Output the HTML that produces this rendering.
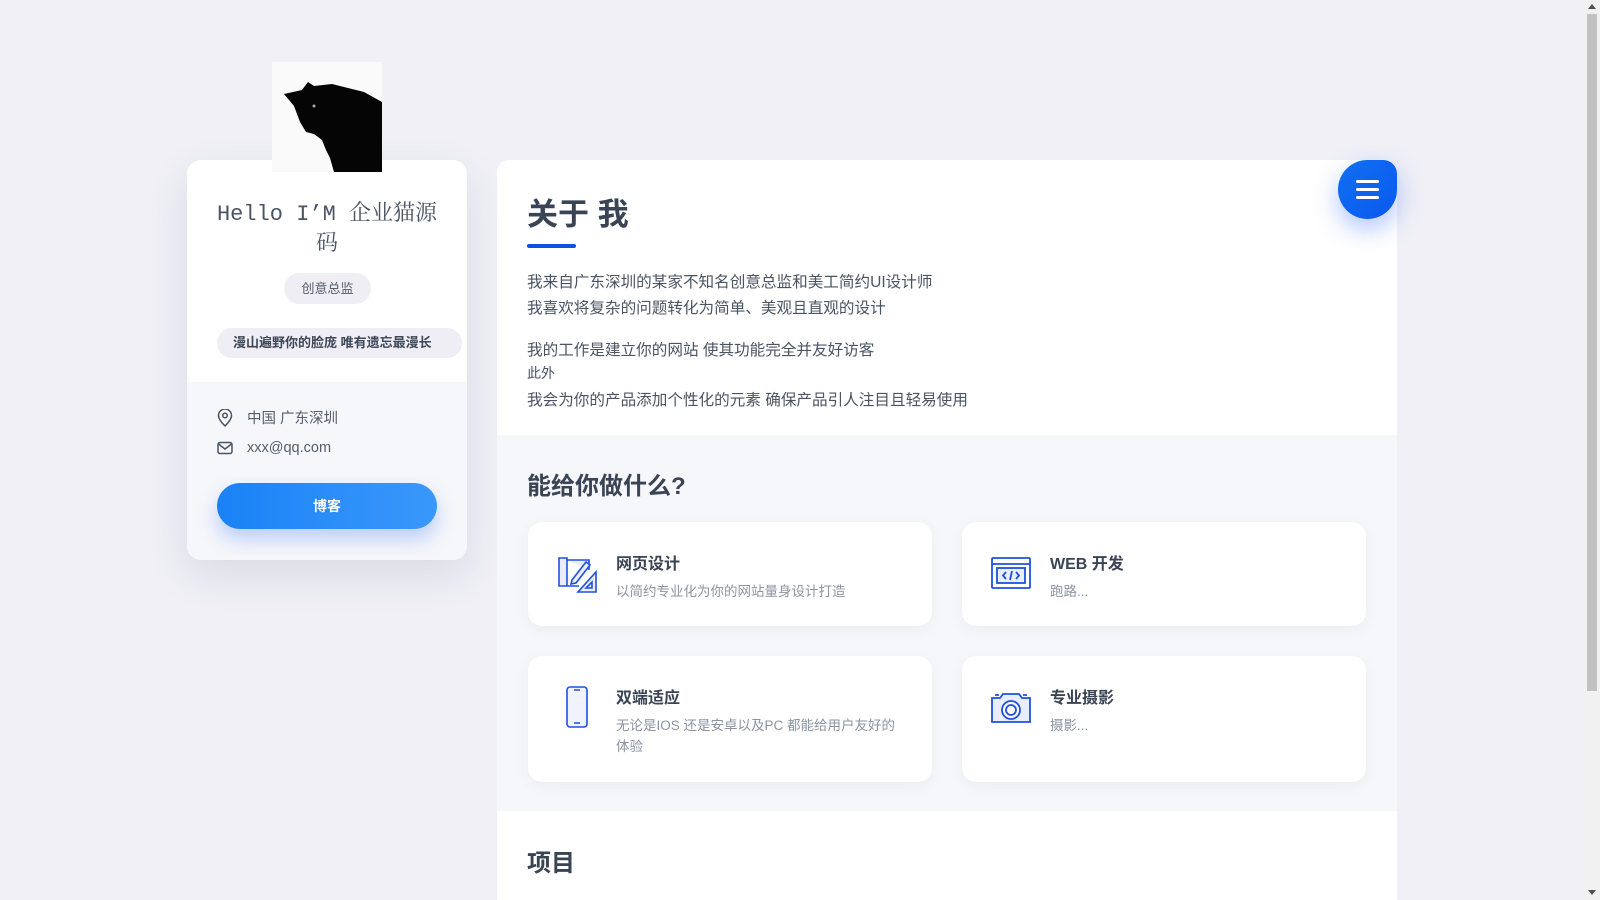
<!DOCTYPE html>
<html><head><meta charset="utf-8"><style>
*{margin:0;padding:0;box-sizing:border-box}
html,body{width:1600px;height:900px;overflow:hidden}
body{background:#f0f0f6;font-family:"Liberation Sans","Noto Sans CJK SC",sans-serif;color:#44505e;position:relative}
.sb{position:absolute;left:1584px;top:0;width:16px;height:900px;background:#f1f1f1}
.sb .th{position:absolute;left:3px;top:14px;width:10px;height:677px;background:#c1c1c1}
.sb .ar{position:absolute;left:4px;width:0;height:0;border-left:4px solid transparent;border-right:4px solid transparent}
.lc{position:absolute;left:187px;top:160px;width:280px;height:400px;background:#fff;border-radius:14px;box-shadow:0 15px 40px rgba(60,70,110,.12);overflow:hidden}
.av{position:absolute;left:272px;top:62px;width:110px;height:110px;background:#fafafa;overflow:hidden;z-index:2}
.lc h1{position:absolute;top:40px;left:0;width:280px;text-align:center;font-family:"Liberation Mono","Noto Serif CJK SC",monospace;font-weight:normal;font-size:22px;line-height:30px;color:#4a5565;padding:0 24px}
.badge{position:absolute;left:97px;top:113px;width:87px;height:31px;border-radius:16px;background:#eeeef4;font-size:13px;line-height:31px;text-align:center;color:#555e6c}
.quote{position:absolute;left:30px;top:168px;width:245px;height:30px;border-radius:15px;background:#eeeef4;font-size:13px;font-weight:bold;line-height:30px;padding-left:16px;color:#3d4757}
.lb{position:absolute;left:0;top:222px;width:280px;height:178px;background:#f6f7fa}
.row{position:absolute;left:30px;font-size:14.5px;color:#555e6c;display:flex;align-items:center}
.row svg{margin-right:14px}
.btn{position:absolute;left:30px;top:101px;width:220px;height:46px;border-radius:23px;background:linear-gradient(90deg,#1a82f6,#3a98fb);color:#fff;font-size:14px;font-weight:bold;text-align:center;line-height:46px;box-shadow:0 10px 20px rgba(40,110,250,.3)}
.mc{position:absolute;left:497px;top:160px;width:900px;height:760px;background:#fff;border-radius:12px 12px 0 0;overflow:hidden}
.menu{position:absolute;left:1338px;top:160px;width:59px;height:59px;border-radius:30px 14px 30px 30px;background:linear-gradient(135deg,#1170f0,#0a58ef);box-shadow:0 10px 25px rgba(30,90,250,.35);z-index:3}
.menu i{position:absolute;left:18px;width:23px;height:3px;background:#fff;border-radius:2px}
.mc h2{position:absolute;left:30px;top:29px;font-size:31px;color:#3a4455;font-weight:bold}
.ul{position:absolute;left:30px;top:84px;width:49px;height:4px;border-radius:2px;background:#0e53e0}
.p{position:absolute;left:30px;font-size:15.6px;color:#4a5462}
.gs{position:absolute;left:0;top:275px;width:900px;height:376px;background:#f6f7fa}
.gs h3{position:absolute;left:30px;top:31px;font-size:24px;color:#3a4455}
.sc{position:absolute;width:404px;background:#fff;border-radius:14px;box-shadow:0 4px 14px rgba(60,70,110,.06)}
.sc svg{position:absolute;left:28px;top:30px}
.sc b{position:absolute;left:88px;top:28px;font-size:16px;color:#3a4455}
.sc span{position:absolute;left:88px;top:59px;font-size:13.5px;color:#8a94a2;line-height:21px;width:285px}
.proj{position:absolute;left:30px;top:683px;font-size:24px;font-weight:bold;color:#3a4455}
</style></head><body>
<div class="av"><svg width="110" height="110" viewBox="0 0 110 110"><path d="M12 32 L30 28 L36 20 L42 24 L60 22 L92 30 L110 40 L110 110 L62 110 L58 96 L54 88 L50 78 L42 72 L34 70 L28 60 L22 44 Z" fill="#050505"/><circle cx="42" cy="44" r="1.5" fill="#aaa"/></svg></div>
<div class="lc">
<h1>Hello I’M 企业猫源码</h1>
<div class="badge">创意总监</div>
<div class="quote">漫山遍野你的脸庞 唯有遗忘最漫长</div>
<div class="lb">
<div class="row" style="top:25px"><svg width="16" height="18" viewBox="0 0 16 18" fill="none" stroke="#4a5462" stroke-width="1.5"><path d="M8 17C3 12 1.5 9 1.5 6.5a6.5 6.5 0 0113 0C14.5 9 13 12 8 17z"/><circle cx="8" cy="6.5" r="2.3"/></svg>中国 广东深圳</div>
<div class="row" style="top:58px"><svg width="16" height="14" viewBox="0 0 16 14" fill="none" stroke="#4a5462" stroke-width="1.5"><rect x="1" y="1.5" width="14" height="11" rx="2"/><path d="M1.5 3l6.5 5 6.5-5"/></svg>xxx@qq.com</div>
<div class="btn">博客</div>
</div>
</div>
<div class="mc">
<h2>关于 我</h2><div class="ul"></div>
<div class="p" style="top:110px">我来自广东深圳的某家不知名创意总监和美工简约UI设计师</div>
<div class="p" style="top:136px">我喜欢将复杂的问题转化为简单、美观且直观的设计</div>
<div class="p" style="top:178px">我的工作是建立你的网站 使其功能完全并友好访客</div>
<div class="p" style="top:203px;font-size:14px">此外</div>
<div class="p" style="top:228px">我会为你的产品添加个性化的元素 确保产品引人注目且轻易使用</div>
<div class="gs">
<h3>能给你做什么?</h3>
<div class="sc" style="left:31px;top:87px;height:104px"><svg width="42" height="42" viewBox="0 0 42 42" fill="#e8eefc" stroke="#1e50e0" stroke-width="1.6"><path d="M3 6h8v28H3zM11 8h22v10M11 34h12"/><path d="M16 28l14-18 4 3-14 18-5 1z"/><path d="M40 20v20H22z"/><path d="M36 30v6h-6z" fill="none"/></svg><b>网页设计</b><span>以简约专业化为你的网站量身设计打造</span></div>
<div class="sc" style="left:465px;top:87px;height:104px"><svg width="42" height="42" viewBox="0 0 42 42" fill="none" stroke="#1e50e0" stroke-width="1.8"><rect x="2" y="6" width="38" height="30" rx="1"/><path d="M2 12h38"/><rect x="7" y="16" width="28" height="15" fill="#e8eefc"/><path d="M16 20l-3 3.5 3 3.5M26 20l3 3.5-3 3.5M22 19l-2 9"/></svg><b>WEB 开发</b><span>跑路...</span></div>
<div class="sc" style="left:31px;top:221px;height:126px"><svg width="42" height="42" viewBox="0 0 42 42" fill="#f0f3fd" stroke="#1e50e0" stroke-width="1.6"><rect x="11" y="1" width="20" height="40" rx="3"/><path d="M18 4h6M18 37h6" fill="none"/></svg><b>双端适应</b><span>无论是IOS 还是安卓以及PC 都能给用户友好的体验</span></div>
<div class="sc" style="left:465px;top:221px;height:126px"><svg width="42" height="42" viewBox="0 0 42 42" fill="none" stroke="#1e50e0" stroke-width="1.8"><path d="M2 12h8l3-4h16l3 4h8v24H2z" fill="#e8eefc"/><circle cx="21" cy="24" r="9" fill="#fff"/><circle cx="21" cy="24" r="5"/><path d="M5 9h4M33 9h4"/></svg><b>专业摄影</b><span>摄影...</span></div>
</div>
<div class="proj">项目</div>
</div>
<div class="menu"><i style="top:20px"></i><i style="top:28px"></i><i style="top:36px"></i></div>
<div class="sb"><div class="ar" style="top:4px;border-bottom:5px solid #505050"></div><div class="th"></div><div class="ar" style="top:890px;border-top:5px solid #505050"></div></div>
</body></html>
